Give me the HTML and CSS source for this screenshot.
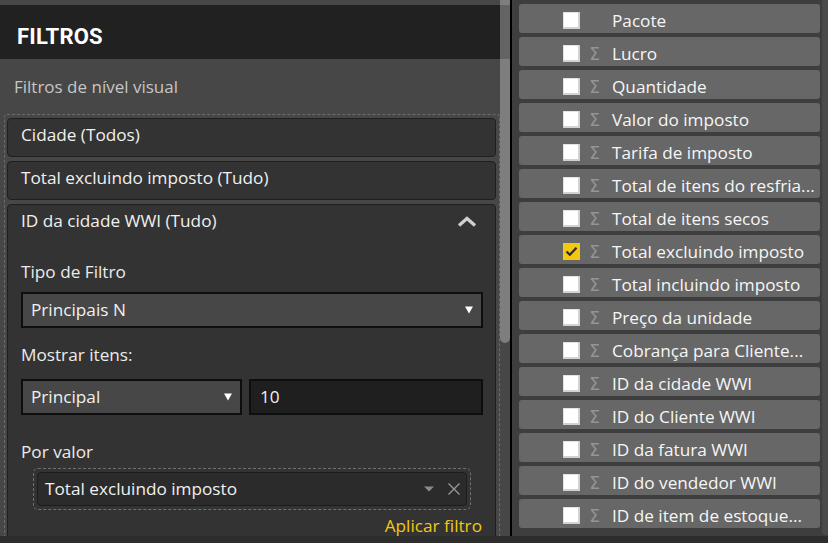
FILE: index.html
```html
<!DOCTYPE html>
<html lang="pt">
<head>
<meta charset="utf-8">
<title>Filtros</title>
<link rel="stylesheet" href="styles.css">
</head>
<body>
<div class="app">
  <div class="main">
    <section class="filters">
      <div class="topstrip"></div>
      <header class="filters-head">FILTROS</header>
      <div class="filters-body">
        <div class="section-title">Filtros de nível visual</div>
        <div class="drop-zone">
          <div class="card">Cidade (Todos)</div>
          <div class="card">Total excluindo imposto (Tudo)</div>
          <div class="card card-open">
            <div class="card-title">
              <span>ID da cidade WWI (Tudo)</span>
              <svg class="chevron" width="20" height="11" viewBox="0 0 20 11"><path d="M2 9.5 L10 2.5 L18 9.5" fill="none" stroke="#d0d0d0" stroke-width="3.2" stroke-linejoin="miter"/></svg>
            </div>
            <div class="label lbl-type">Tipo de Filtro</div>
            <div class="select">
              <span>Principais N</span>
              <svg class="caret" width="8" height="8" viewBox="0 0 8 8"><path d="M0 0.5 H8 L4 7.5 Z" fill="#ffffff"/></svg>
            </div>
            <div class="label lbl-show">Mostrar itens:</div>
            <div class="row-2">
              <div class="select select-half">
                <span>Principal</span>
                <svg class="caret" width="8" height="8" viewBox="0 0 8 8"><path d="M0 0.5 H8 L4 7.5 Z" fill="#ffffff"/></svg>
              </div>
              <div class="input">10</div>
            </div>
            <div class="label lbl-value">Por valor</div>
            <div class="value-drop">
              <div class="value-field">
                <span>Total excluindo imposto</span>
                <span class="value-icons">
                  <svg width="10" height="6" viewBox="0 0 10 6"><path d="M0 0.5 H10 L5 5.5 Z" fill="#8a8a8a"/></svg>
                  <svg width="12" height="12" viewBox="0 0 12 12"><path d="M0.5 0.5 L11.5 11.5 M11.5 0.5 L0.5 11.5" stroke="#9a9a9a" stroke-width="1.3"/></svg>
                </span>
              </div>
            </div>
            <div class="apply">Aplicar filtro</div>
          </div>
        </div>
      </div>
      <div class="scroll-thumb"></div>
    </section>
    <div class="divider"></div>
    <section class="fields">
      <ul class="field-list">
        <li class="field"><span class="check"></span><span class="sigma"></span><span class="name">Pacote</span></li>
        <li class="field"><span class="check"></span><span class="sigma">Σ</span><span class="name">Lucro</span></li>
        <li class="field"><span class="check"></span><span class="sigma">Σ</span><span class="name">Quantidade</span></li>
        <li class="field"><span class="check"></span><span class="sigma">Σ</span><span class="name">Valor do imposto</span></li>
        <li class="field"><span class="check"></span><span class="sigma">Σ</span><span class="name">Tarifa de imposto</span></li>
        <li class="field"><span class="check"></span><span class="sigma">Σ</span><span class="name">Total de itens do resfria...</span></li>
        <li class="field"><span class="check"></span><span class="sigma">Σ</span><span class="name">Total de itens secos</span></li>
        <li class="field"><span class="check checked"><svg width="13" height="11" viewBox="0 0 13 11"><path d="M1.5 5.5 L4.8 8.8 L11.5 1.8" fill="none" stroke="#2b2b2b" stroke-width="2.2"/></svg></span><span class="sigma">Σ</span><span class="name">Total excluindo imposto</span></li>
        <li class="field"><span class="check"></span><span class="sigma">Σ</span><span class="name">Total incluindo imposto</span></li>
        <li class="field"><span class="check"></span><span class="sigma">Σ</span><span class="name">Preço da unidade</span></li>
        <li class="field"><span class="check"></span><span class="sigma">Σ</span><span class="name">Cobrança para Cliente...</span></li>
        <li class="field"><span class="check"></span><span class="sigma">Σ</span><span class="name">ID da cidade WWI</span></li>
        <li class="field"><span class="check"></span><span class="sigma">Σ</span><span class="name">ID do Cliente WWI</span></li>
        <li class="field"><span class="check"></span><span class="sigma">Σ</span><span class="name">ID da fatura WWI</span></li>
        <li class="field"><span class="check"></span><span class="sigma">Σ</span><span class="name">ID do vendedor WWI</span></li>
        <li class="field"><span class="check"></span><span class="sigma">Σ</span><span class="name">ID de item de estoque...</span></li>
      </ul>
      <div class="fields-track"></div>
    </section>
  </div>
  <div class="bottom-strip"></div>
</div>
</body>
</html>
```

FILE: styles.css
```css
* { box-sizing: border-box; }

html, body {
  margin: 0;
  padding: 0;
  background: #2d2d2d;
}

body {
  font-family: "Open Sans", "Noto Sans", sans-serif;
  font-size: 17.2px;
  color: #ececec;
}

.app {
  width: 828px;
  height: 543px;
  display: flex;
  flex-direction: column;
  overflow: hidden;
}

.main {
  height: 536px;
  display: flex;
  flex-direction: row;
}

/* ---------- Filters pane ---------- */
.filters {
  width: 510px;
  position: relative;
  background: #474747;
  overflow: hidden;
  display: flex;
  flex-direction: column;
}

.topstrip {
  height: 5px;
  flex: none;
}

.filters-head {
  flex: none;
  height: 54px;
  background: #212121;
  padding: 9px 0 0 17px;
  font-family: Roboto, "Liberation Sans", sans-serif;
  font-weight: 700;
  font-size: 22px;
  line-height: 45px;
  color: #ffffff;
  letter-spacing: 0.2px;
}

.filters-body {
  padding: 17px 10px 0 4px;
}

.section-title {
  padding-left: 10px;
  font-size: 17px;
  line-height: 22px;
  color: #c6c6c6;
}

.drop-zone {
  margin-top: 16px;
  border: 1px dashed #6c6c6c;
  border-bottom: none;
  border-radius: 3px 3px 0 0;
  padding: 3px 3px 0 2px;
  display: flex;
  flex-direction: column;
  gap: 4px;
}

.card {
  background: #333333;
  border: 1px solid #1f1f1f;
  border-radius: 4px;
  padding: 5px 12px 10px 13px;
  line-height: 22px;
  color: #f0f0f0;
}

.card-open {
  padding-bottom: 20px;
}

.card-title {
  display: flex;
  justify-content: space-between;
  align-items: center;
}

.chevron {
  margin-right: 6px;
  margin-top: 1px;
}

.label {
  line-height: 22px;
  color: #ebebeb;
}

.lbl-type { margin-top: 29px; }
.lbl-show { margin-top: 16px; }
.lbl-value { margin-top: 26px; }

.select {
  margin-top: 9px;
  height: 36px;
  border: 2px solid #0e0e0e;
  background: #474747;
  padding: 0 8px 0 8px;
  line-height: 32px;
  display: flex;
  justify-content: space-between;
  align-items: center;
  color: #f0f0f0;
}

.row-2 {
  margin-top: 13px;
  display: flex;
  gap: 7px;
}

.row-2 .select {
  margin-top: 0;
}

.select-half {
  width: 221px;
  flex: none;
}

.input {
  flex: 1;
  height: 36px;
  border: 2px solid #0e0e0e;
  background: #1f1f1f;
  padding-left: 9px;
  line-height: 32px;
  color: #f0f0f0;
}

.value-drop {
  margin: 5px 12px 0;
  height: 42px;
  border: 1px dashed #707070;
  border-radius: 5px;
  padding: 3px;
}

.value-field {
  height: 34px;
  background: #2b2b2b;
  border: 1px solid #1c1c1c;
  border-radius: 4px;
  padding: 0 6px 0 7px;
  line-height: 32px;
  display: flex;
  justify-content: space-between;
  align-items: center;
  color: #f0f0f0;
}

.value-icons {
  display: flex;
  align-items: center;
  gap: 14px;
}

.apply {
  margin-top: 5px;
  text-align: right;
  line-height: 22px;
  color: #f2c811;
  padding-right: 1px;
}

.scroll-thumb {
  position: absolute;
  top: 0;
  right: 0;
  width: 10px;
  height: 343px;
  background: rgba(255, 255, 255, 0.3);
  border-radius: 0 0 5px 5px;
}

.divider {
  width: 2px;
  background: #000000;
  flex: none;
}

/* ---------- Fields pane ---------- */
.fields {
  flex: 1;
  position: relative;
  background: #3e3e3e;
  padding: 4px 0 0 7px;
}

.field-list {
  list-style: none;
  margin: 0;
  padding: 0;
  width: 301px;
  display: flex;
  flex-direction: column;
  gap: 4px;
}

.field {
  height: 29px;
  background: #676767;
  border-radius: 3px;
  display: flex;
  align-items: center;
  padding-left: 44px;
  padding-right: 2px;
}

.check {
  width: 17px;
  height: 17px;
  flex: none;
  margin-top: 3px;
  background: #ffffff;
  box-shadow: inset -2px -2px 0 #d2d2d2, inset 1px 1px 0 #e9e0e0;
  display: flex;
  align-items: center;
  justify-content: center;
}

.check.checked {
  background: #f2c811;
  box-shadow: none;
}

.sigma {
  width: 15px;
  flex: none;
  margin-left: 7px;
  font-family: "DejaVu Sans", sans-serif;
  font-size: 17px;
  line-height: 22px;
  padding-top: 4px;
  color: #959595;
  text-align: center;
}

.name {
  margin-left: 10px;
  flex: 1;
  min-width: 0;
  line-height: 22px;
  padding-top: 4px;
  white-space: nowrap;
  color: #f6f6f6;
}

.fields-track {
  position: absolute;
  top: 0;
  right: 0;
  width: 6px;
  bottom: 1px;
  background: #4a4a4a;
  border-radius: 0 0 0 4px;
}

.bottom-strip {
  height: 7px;
  background: #2d2d2d;
}
```
